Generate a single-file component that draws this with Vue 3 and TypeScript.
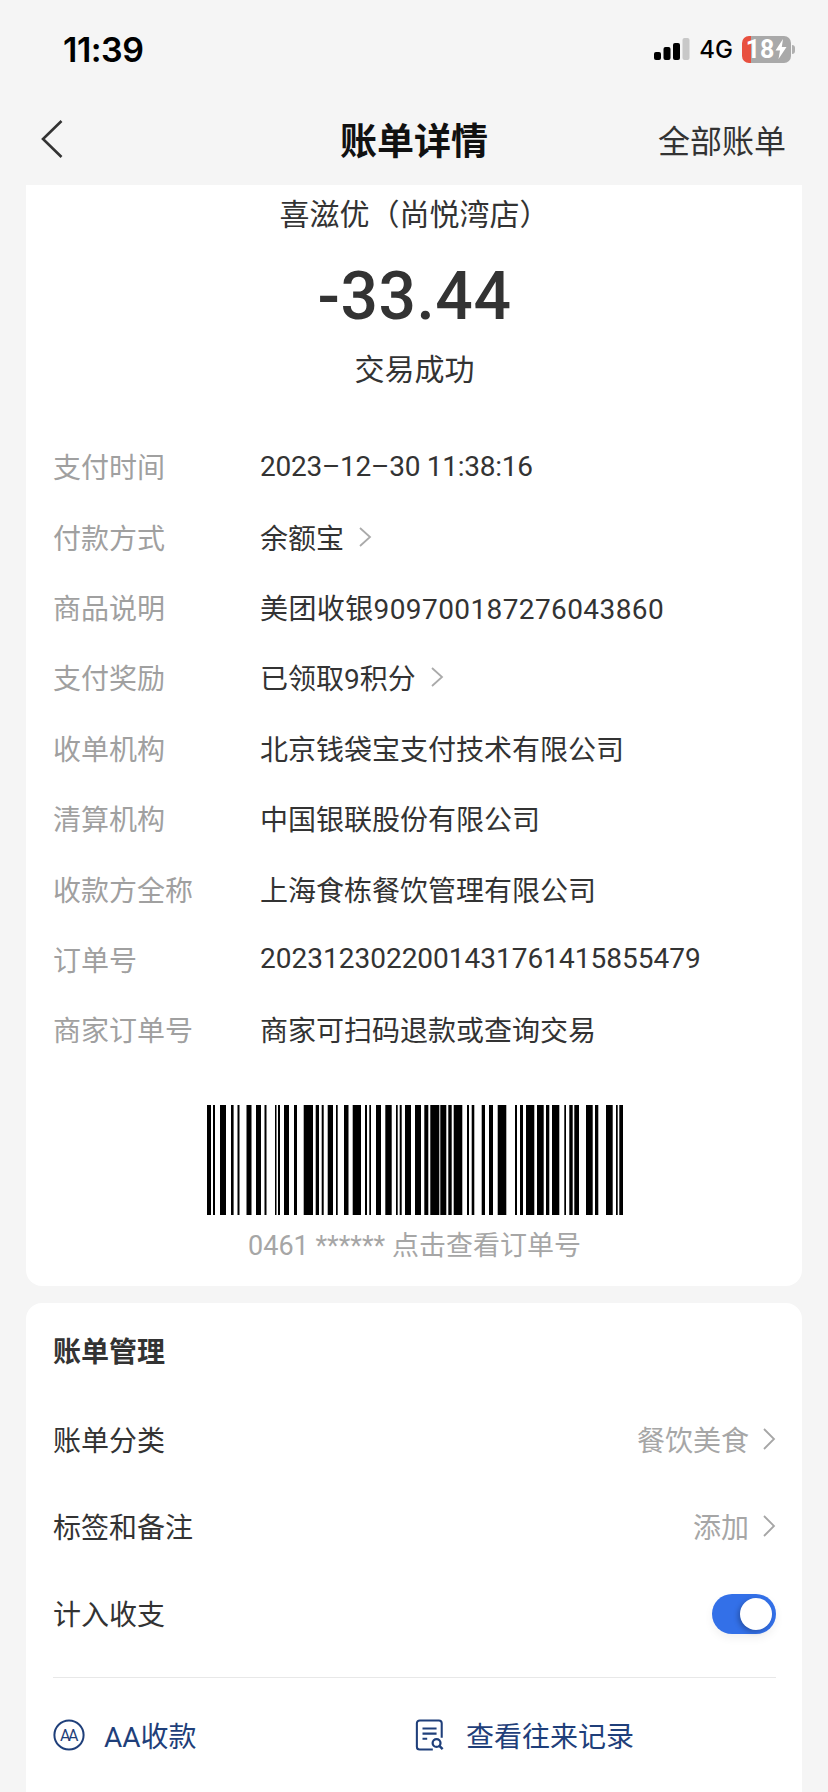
<script setup lang="ts">
// 账单详情页：信息行和条码都由数据生成
interface InfoRow {
  label: string;
  value: string;
  link?: boolean;
  spacing?: "tight" | "loose"; // 数字较多的行，微调字距
}

const infoRows: InfoRow[] = [
  { label: "支付时间", value: "2023–12–30 11:38:16", spacing: "tight" },
  { label: "付款方式", value: "余额宝", link: true },
  { label: "商品说明", value: "美团收银909700187276043860", spacing: "loose" },
  { label: "支付奖励", value: "已领取9积分", link: true },
  { label: "收单机构", value: "北京钱袋宝支付技术有限公司" },
  { label: "清算机构", value: "中国银联股份有限公司" },
  { label: "收款方全称", value: "上海食栋餐饮管理有限公司" },
  { label: "订单号", value: "2023123022001431761415855479" },
  { label: "商家订单号", value: "商家可扫码退款或查询交易" },
];

// [起点, 终点]，单位 px，相对条码左边
const bars: [number, number][] = [
  [0, 4], [6, 8], [13, 19], [24, 26.6], [30.5, 32.5], [39.5, 44.5], [49, 54], [57.5, 59.5],
  [68, 69.5], [71, 73], [77, 82], [87, 90], [96.7, 106], [108.7, 112], [114.7, 116.7], [120.7, 126],
  [129, 130.7], [137, 141.5], [145.7, 154], [158, 160], [162.3, 164], [169, 174], [178.3, 184.7], [189, 190.7],
  [192.7, 194.7], [198, 204], [208, 214], [217.3, 221.3], [223.3, 232.3], [233.3, 239.3], [241.3, 244.7], [246.7, 255.3],
  [260, 262], [264.7, 267.3], [274.7, 278], [282, 286], [290.7, 299.3], [308, 310], [313, 316], [319, 327.3],
  [330, 336.7], [339, 342.3], [345, 352.3], [357.3, 359], [362.3, 365.7], [367.3, 372], [379, 385.7], [388, 391.3],
  [399, 405.7], [409, 410.7], [412.3, 416],
];
</script>

<template>
  <div class="page">
    <header class="status">
      <span class="clock">11:39</span>
      <div class="status-right">
        <svg class="signal" width="36" height="24" viewBox="0 0 36 24">
          <rect x="0" y="15" width="7" height="8" rx="2" fill="#000" />
          <rect x="9.5" y="10" width="7" height="13" rx="2" fill="#000" />
          <rect x="19" y="6" width="7" height="17" rx="2" fill="#000" />
          <rect x="28.5" y="1" width="7" height="22" rx="2" fill="#c8c8c8" />
        </svg>
        <span class="net">4G</span>
        <div class="battery">
          <span>18</span>
          <svg width="12" height="20" viewBox="0 0 12 20">
            <path d="M8 0 0.5 11.5H5L3.5 20 11.5 8H6.8Z" fill="#fff" />
          </svg>
        </div>
        <i class="battery-cap"></i>
      </div>
    </header>

    <nav class="nav">
      <svg class="back" width="24" height="40" viewBox="0 0 24 40">
        <path d="M21.5 2 3 20l18.5 18" fill="none" stroke="#333" stroke-width="2.6" />
      </svg>
      <h1 class="nav-title">账单详情</h1>
      <span class="nav-all">全部账单</span>
    </nav>

    <section class="card detail">
      <div class="merchant">喜滋优（尚悦湾店）</div>
      <div class="amount">-33.44</div>
      <div class="result">交易成功</div>

      <div class="info">
        <div v-for="row in infoRows" :key="row.label" class="info-row">
          <span class="info-label">{{ row.label }}</span>
          <span class="info-value" :class="row.spacing">{{ row.value }}</span>
          <svg v-if="row.link" class="info-arrow" width="14" height="22" viewBox="0 0 14 22">
            <path d="M2 2l10 9-10 9" fill="none" stroke="#aaa" stroke-width="1.8" />
          </svg>
        </div>
      </div>

      <svg class="barcode" width="416" height="110" viewBox="0 0 416 110">
        <rect v-for="b in bars" :key="b[0]" :x="b[0]" y="0" :width="b[1] - b[0]" height="110" fill="#000" />
      </svg>
      <div class="barcode-text">0461 ****** 点击查看订单号</div>
    </section>

    <section class="card manage">
      <h2 class="manage-title">账单管理</h2>
      <div class="manage-row">
        <span>账单分类</span>
        <span class="manage-value">餐饮美食</span>
        <svg width="14" height="24" viewBox="0 0 14 24">
          <path d="M2 2l10 10L2 22" fill="none" stroke="#a6a6a6" stroke-width="1.8" />
        </svg>
      </div>
      <div class="manage-row">
        <span>标签和备注</span>
        <span class="manage-value">添加</span>
        <svg width="14" height="24" viewBox="0 0 14 24">
          <path d="M2 2l10 10L2 22" fill="none" stroke="#a6a6a6" stroke-width="1.8" />
        </svg>
      </div>
      <div class="manage-row">
        <span>计入收支</span>
        <div class="toggle"><i></i></div>
      </div>
      <div class="divider"></div>
      <div class="actions">
        <div class="action action-left">
          <svg width="32" height="32" viewBox="0 0 32 32">
            <circle cx="16" cy="16" r="14.6" fill="none" stroke="#1f3f7a" stroke-width="2" />
            <text x="15" y="21.5" text-anchor="middle" class="aa-mark">AA</text>
          </svg>
          <span>AA收款</span>
        </div>
        <div class="action">
          <svg width="30" height="32" viewBox="0 0 32 34">
            <path d="M28.5 20V4.5a3 3 0 0 0-3-3H5a3 3 0 0 0-3 3v25a3 3 0 0 0 3 3h14" fill="none" stroke="#1f3f7a" stroke-width="2.2" />
            <path d="M8 10h15M8 15.5h15M8 21h5" fill="none" stroke="#1f3f7a" stroke-width="2.2" />
            <circle cx="23" cy="25.5" r="4.2" fill="none" stroke="#1f3f7a" stroke-width="2.4" />
            <path d="M26 28.5l3.5 3.5" stroke="#1f3f7a" stroke-width="2.6" />
          </svg>
          <span>查看往来记录</span>
        </div>
      </div>
    </section>
  </div>
</template>

<style>
html,
body {
  margin: 0;
  background: #f5f5f5;
}
</style>

<style scoped>
.page {
  width: 828px;
  height: 1792px;
  overflow: hidden;
  background: #f5f5f5;
  color: #333;
  font-family: "Roboto", "Noto Sans CJK SC", sans-serif;
}
.status {
  height: 98px;
  padding: 0 33px 0 63px;
  box-sizing: border-box;
  display: flex;
  align-items: center;
  justify-content: space-between;
  color: #000;
}
.clock {
  font-family: "Inter", sans-serif;
  font-size: 34px;
  font-weight: 600;
  letter-spacing: -0.5px;
}
.status-right {
  display: flex;
  align-items: center;
}
.signal {
  margin-right: 9px;
}
.net {
  font-family: "Inter", sans-serif;
  font-size: 24px;
  font-weight: 500;
  margin-right: 9px;
}
.battery {
  width: 49px;
  height: 27px;
  border-radius: 7px;
  background: linear-gradient(90deg, #e8503f 0 9px, #a9a9a9 9px);
  color: #fff;
  font-size: 25px;
  font-weight: 700;
  display: flex;
  align-items: center;
  justify-content: center;
  gap: 1px;
}
.battery-cap {
  width: 3px;
  height: 9px;
  margin-left: 1px;
  border-radius: 0 3px 3px 0;
  background: #b0b0b0;
}
.nav {
  height: 82px;
  margin-bottom: 5px;
  padding: 0 42px 0 40px;
  display: flex;
  align-items: center;
  position: relative;
  justify-content: space-between;
}
.nav-title {
  position: absolute;
  left: 0;
  right: 0;
  margin: 0;
  text-align: center;
  font-size: 37px;
  font-weight: 700;
  color: #111;
}
.nav-all {
  font-size: 32px;
  color: #333;
}
.card {
  margin: 0 26px;
  background: #fff;
}
.detail {
  border-radius: 0 0 16px 16px;
  padding: 10px 26px 24px 27px;
  text-align: center;
}
.merchant {
  font-size: 30px;
  line-height: 40px;
}
.amount {
  margin-top: 22px;
  font-size: 66px;
  font-weight: 500;
  line-height: 80px;
  letter-spacing: 0.5px;
}
.result {
  margin-top: 13px;
  font-size: 30px;
  line-height: 40px;
}
.info {
  margin-top: 41px;
  text-align: left;
}
.info-row {
  height: 70.4px;
  display: flex;
  align-items: center;
  font-size: 28px;
}
.info-label {
  width: 207px;
  flex: none;
  color: #a0a0a0;
}
.info-value.tight {
  letter-spacing: -0.25px;
}
.info-value.loose {
  letter-spacing: 0.4px;
}
.info-arrow {
  margin-left: 14px;
}
.barcode {
  display: block;
  margin: 40px auto 0;
}
.barcode-text {
  margin-top: 15px;
  font-size: 27px;
  line-height: 32px;
  color: #a6a6a6;
}
.manage {
  margin-top: 17px;
  height: 520px;
  padding: 30px 26px 0 27px;
  border-radius: 16px 16px 0 0;
}
.manage-title {
  margin: 0 0 23px;
  font-size: 28px;
  font-weight: 700;
  line-height: 40px;
}
.manage-row {
  height: 87px;
  display: flex;
  align-items: center;
  gap: 13px;
  font-size: 28px;
}
.manage-row > span:first-child {
  margin-right: auto;
}
.manage-value {
  color: #a6a6a6;
}
.toggle {
  width: 64px;
  height: 40px;
  margin-top: 2px;
  border-radius: 20px;
  background: #3370e8;
  padding: 4px 4px 4px 0;
  box-sizing: border-box;
  display: flex;
  justify-content: flex-end;
  box-shadow: 0 4px 10px rgba(0, 0, 0, 0.06);
}
.toggle i {
  width: 32px;
  height: 32px;
  border-radius: 50%;
  background: #fff;
  box-shadow: -2px 2px 5px rgba(0, 0, 0, 0.25);
}
.divider {
  margin-top: 20px;
  height: 1px;
  background: #e8e8e8;
}
.actions {
  margin-top: 37px;
  display: flex;
}
.action {
  display: flex;
  align-items: center;
  gap: 21px;
  height: 40px;
  font-size: 28px;
  color: #1f3f7a;
}
.action-left {
  width: 362px;
  gap: 19px;
}
.aa-mark {
  font-family: "Roboto", sans-serif;
  font-size: 16px;
  font-weight: 400;
  letter-spacing: -2.5px;
  fill: #1f3f7a;
}
</style>
